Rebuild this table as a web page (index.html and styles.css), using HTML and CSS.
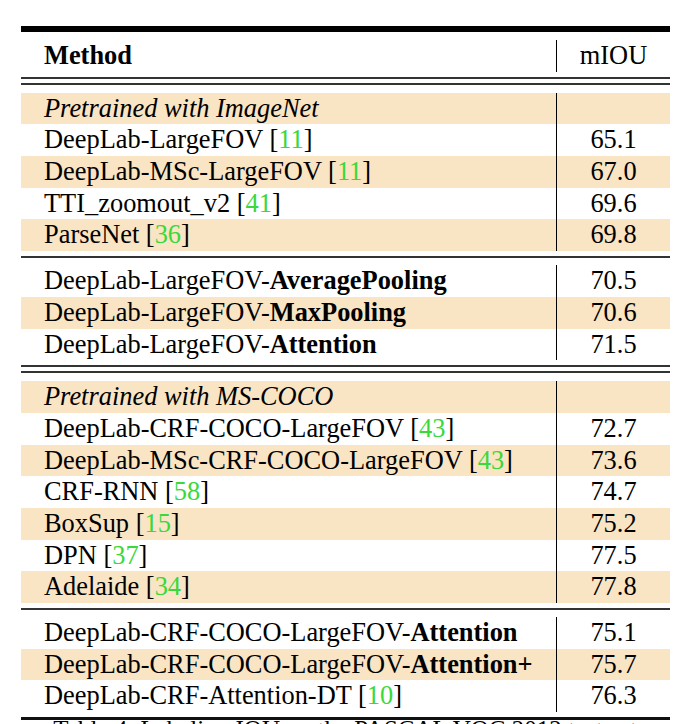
FILE: index.html
```html
<!DOCTYPE html>
<html>
<head>
<meta charset="utf-8">
<link rel="stylesheet" href="styles.css">
</head>
<body>
<div class="page">
  <div class="table">
    <div class="rule-top"></div>
    <div class="row head"><div class="c1"><b>Method</b></div><div class="c2">mIOU</div></div>
    <div class="rule-double"></div>

    <div class="section">
      <div class="row alt"><div class="c1"><i>Pretrained with ImageNet</i></div><div class="c2"></div></div>
      <div class="row"><div class="c1">DeepLab-LargeFOV [<span class="cite">11</span>]</div><div class="c2">65.1</div></div>
      <div class="row alt"><div class="c1">DeepLab-MSc-LargeFOV [<span class="cite">11</span>]</div><div class="c2">67.0</div></div>
      <div class="row"><div class="c1">TTI_zoomout_v2 [<span class="cite">41</span>]</div><div class="c2">69.6</div></div>
      <div class="row alt"><div class="c1">ParseNet [<span class="cite">36</span>]</div><div class="c2">69.8</div></div>
    </div>
    <div class="rule-single"></div>
    <div class="section">
      <div class="row"><div class="c1">DeepLab-LargeFOV-<b>AveragePooling</b></div><div class="c2">70.5</div></div>
      <div class="row alt"><div class="c1">DeepLab-LargeFOV-<b>MaxPooling</b></div><div class="c2">70.6</div></div>
      <div class="row"><div class="c1">DeepLab-LargeFOV-<b>Attention</b></div><div class="c2">71.5</div></div>
    </div>
    <div class="rule-double"></div>

    <div class="section">
      <div class="row alt"><div class="c1"><i>Pretrained with MS-COCO</i></div><div class="c2"></div></div>
      <div class="row"><div class="c1">DeepLab-CRF-COCO-LargeFOV [<span class="cite">43</span>]</div><div class="c2">72.7</div></div>
      <div class="row alt"><div class="c1">DeepLab-MSc-CRF-COCO-LargeFOV [<span class="cite">43</span>]</div><div class="c2">73.6</div></div>
      <div class="row"><div class="c1">CRF-RNN [<span class="cite">58</span>]</div><div class="c2">74.7</div></div>
      <div class="row alt"><div class="c1">BoxSup [<span class="cite">15</span>]</div><div class="c2">75.2</div></div>
      <div class="row"><div class="c1">DPN [<span class="cite">37</span>]</div><div class="c2">77.5</div></div>
      <div class="row alt"><div class="c1">Adelaide [<span class="cite">34</span>]</div><div class="c2">77.8</div></div>
    </div>
    <div class="rule-single"></div>
    <div class="section">
      <div class="row"><div class="c1">DeepLab-CRF-COCO-LargeFOV-<b>Attention</b></div><div class="c2">75.1</div></div>
      <div class="row alt"><div class="c1">DeepLab-CRF-COCO-LargeFOV-<b>Attention+</b></div><div class="c2">75.7</div></div>
      <div class="row"><div class="c1">DeepLab-CRF-Attention-DT [<span class="cite">10</span>]</div><div class="c2">76.3</div></div>
    </div>
    <div class="rule-bottom"></div>
  </div>
  <p class="caption">Table 4: Labeling IOU on the PASCAL VOC 2012 test set</p>
</div>
</body>
</html>
```

FILE: styles.css
```css
html, body {
  margin: 0;
  padding: 0;
  background: #ffffff;
}

body {
  font-family: "Liberation Serif", Tinos, "Times New Roman", Times, "DejaVu Serif", serif;
  color: #000;
  overflow: hidden;
}

.page {
  width: 682px;
  height: 724px;
  overflow: hidden;
  padding-top: 26px;
  box-sizing: border-box;
}

.table {
  margin-left: 21px;
  width: 649px;
}

.rule-top {
  height: 6px;
  background: #000;
  margin-bottom: 8px;
}

.rule-double {
  margin-top: 5px;
  margin-bottom: 8px;
  height: 8px;
  border-top: 2px solid #333;
  border-bottom: 2px solid #333;
  box-sizing: border-box;
}

.rule-single {
  margin-top: 5px;
  margin-bottom: 7px;
  height: 2px;
  background: #333;
}

.rule-bottom {
  margin-top: 5px;
  height: 3px;
  background: #111;
}

.row {
  display: grid;
  grid-template-columns: 535px 114px;
  height: 31.7px;
  font-size: 26.4px;
  line-height: 31.7px;
}

.row.alt {
  background: #f9e4c4;
}

.c1 {
  padding-left: 23px;
  white-space: nowrap;
}

.c2 {
  border-left: 1px solid #000;
  text-align: center;
  white-space: nowrap;
}

.cite {
  color: #3ad83a;
}

.caption {
  margin: -6px 0 0;
  padding-left: 8px;
  font-size: 25px;
  line-height: 31.7px;
  text-align: center;
  white-space: nowrap;
}
```
